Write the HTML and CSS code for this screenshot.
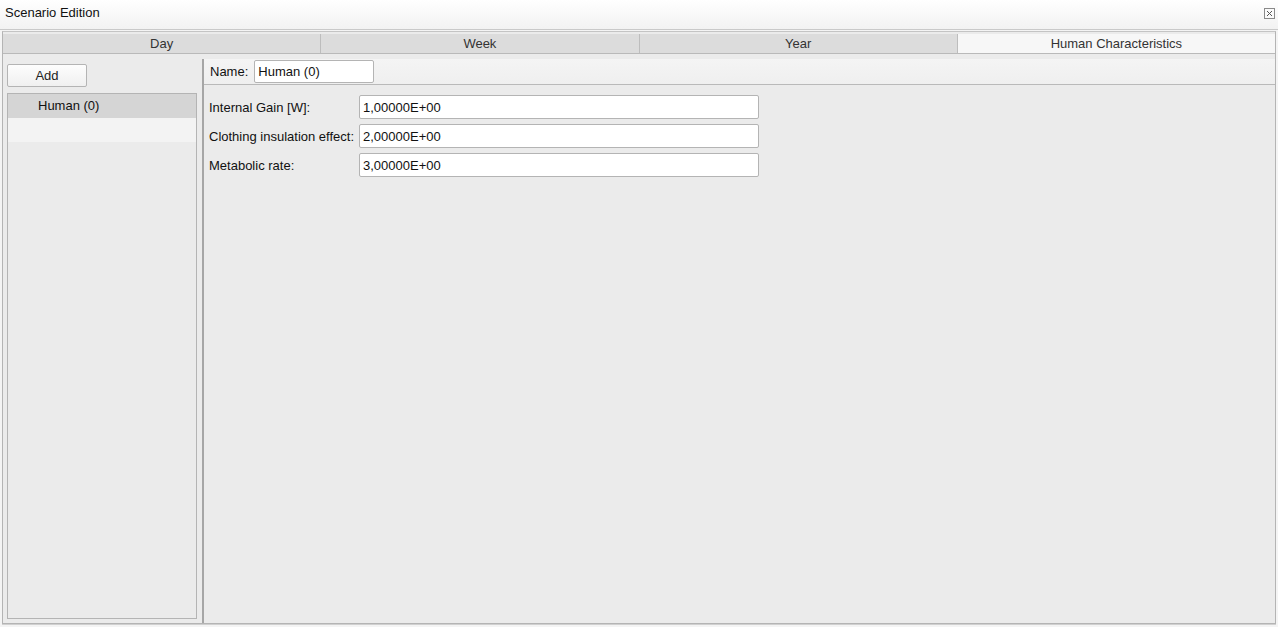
FILE: index.html
```html
<!DOCTYPE html>
<html lang="en">
<head>
    <meta charset="UTF-8">
    <title>Scenario Edition</title>
    <link rel="stylesheet" href="styles.css">
</head>
<body>
    <div class="titlebar">
        <span class="title">Scenario Edition</span>
        <span class="close-btn">
            <svg width="11" height="11" viewBox="0 0 11 11">
                <rect x="0.5" y="0.5" width="10" height="10" fill="#fafafa" stroke="#8a8a8a"/>
                <path d="M3 3 L8 8 M8 3 L3 8" stroke="#555" stroke-width="1"/>
            </svg>
        </span>
    </div>

    <div class="window">
        <div class="tabs">
            <div class="tab">Day</div>
            <div class="tab">Week</div>
            <div class="tab">Year</div>
            <div class="tab active">Human Characteristics</div>
        </div>

        <div class="content">
            <!-- Left side: list of humans -->
            <div class="left-panel">
                <button class="add-button">Add</button>
                <div class="human-list">
                    <div class="list-item selected">Human (0)</div>
                    <div class="list-item stripe"></div>
                </div>
            </div>

            <div class="splitter"></div>

            <!-- Right side: properties -->
            <div class="right-panel">
                <div class="name-bar">
                    <label>Name:</label>
                    <input class="name-input" type="text" value="Human (0)">
                </div>
                <div class="fields">
                    <div class="field-row">
                        <label>Internal Gain [W]:</label>
                        <input type="text" value="1,00000E+00">
                    </div>
                    <div class="field-row">
                        <label>Clothing insulation effect:</label>
                        <input type="text" value="2,00000E+00">
                    </div>
                    <div class="field-row">
                        <label>Metabolic rate:</label>
                        <input type="text" value="3,00000E+00">
                    </div>
                </div>
            </div>
        </div>
    </div>
</body>
</html>
```

FILE: styles.css
```css
/* Base */
html, body {
    margin: 0;
    padding: 0;
}

body {
    width: 1278px;
    height: 627px;
    overflow: hidden;
    font-family: "Liberation Sans", Arial, sans-serif;
    font-size: 13px;
    color: #111;
    background-color: #f4f4f4;
}

/* Title bar */
.titlebar {
    height: 30px;
    display: flex;
    align-items: flex-start;
    justify-content: space-between;
    padding: 5px 3px 0 5px;
    box-sizing: border-box;
    background: linear-gradient(#ffffff, #f2f2f2);
    border-bottom: 1px solid #c9c9c9;
}

.title {
    line-height: 16px;
}

.close-btn {
    margin-top: 3px;
    display: flex;
}

/* Main window frame */
.window {
    margin: 1px 2px 0 2px;
    height: 591px;
    border: 1px solid #b4b4b4;
    border-top-color: #c4c4c4;
    display: flex;
    flex-direction: column;
    background-color: #ebebeb;
    box-shadow: 0 1px 0 #d0d0d0;
}

/* Tabs */
.tabs {
    display: flex;
    margin-top: 2px;
    height: 19px;
    background-color: #dcdcdc;
    border-bottom: 1px solid #b9b9b9;
}

.tab {
    flex: 1;
    text-align: center;
    line-height: 19px;
    color: #333;
    border-left: 1px solid #bdbdbd;
}

.tab:first-child {
    border-left: none;
}

.tab.active {
    background-color: #f7f7f7;
}

/* Content area */
.content {
    flex: 1;
    display: flex;
    min-height: 0;
}

.left-panel {
    width: 190px;
    padding: 10px 0 4px 4px;
    display: flex;
    flex-direction: column;
}

.add-button {
    width: 80px;
    height: 23px;
    padding: 0;
    font-family: inherit;
    font-size: 13px;
    color: #222;
    background: linear-gradient(#fdfdfd, #f0f0f0);
    border: 1px solid #b4b4b4;
    border-radius: 2px;
    margin-bottom: 6px;
}

.human-list {
    flex: 1;
    border: 1px solid #b4b4b4;
}

.list-item {
    height: 24px;
    line-height: 24px;
    padding-left: 30px;
}

.list-item.selected {
    background-color: #d5d5d5;
}

.list-item.stripe {
    background-color: #f3f3f3;
}

.splitter {
    width: 2px;
    margin: 5px 0 0 5px;
    background-color: #a6a6a6;
}

.right-panel {
    flex: 1;
    display: flex;
    flex-direction: column;
    margin-top: 5px;
}

.name-bar {
    height: 25px;
    display: flex;
    align-items: center;
    gap: 6px;
    padding-left: 6px;
    background: linear-gradient(#f4f4f4, #efefef);
    border-bottom: 1px solid #b9b9b9;
}

input {
    font-family: inherit;
    font-size: 13px;
    color: #111;
    background-color: #fff;
    border: 1px solid #b4b4b4;
    border-radius: 2px;
    padding: 0 3px;
    box-sizing: border-box;
    height: 24px;
}

.name-input {
    width: 120px;
    height: 23px;
}

.fields {
    padding: 10px 0 0 5px;
    display: flex;
    flex-direction: column;
    gap: 5px;
}

.field-row {
    display: flex;
    align-items: center;
}

.field-row label {
    width: 150px;
    white-space: nowrap;
}

.field-row input {
    width: 400px;
}
```
